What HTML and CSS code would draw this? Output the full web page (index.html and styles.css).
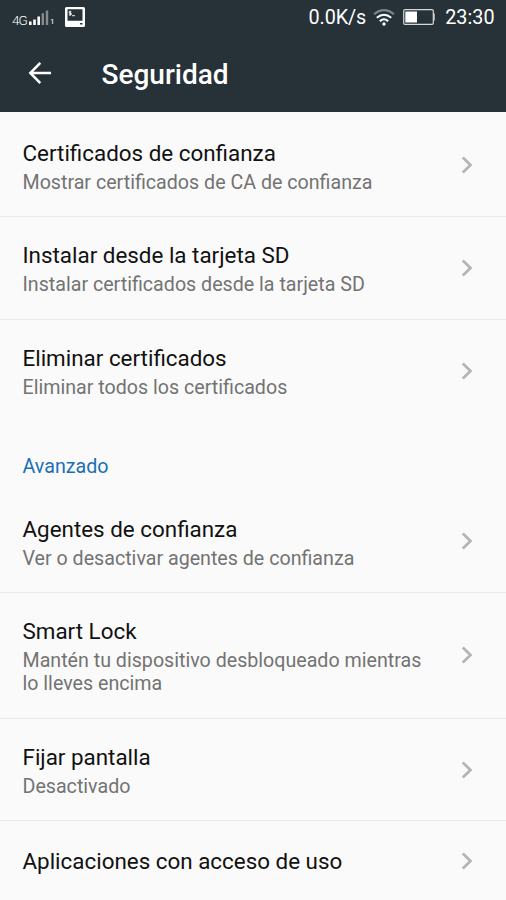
FILE: index.html
```html
<!DOCTYPE html>
<html lang="es">
<head>
<meta charset="utf-8">
<title>Seguridad</title>
<link rel="stylesheet" href="styles.css">
</head>
<body>
<svg class="defs" width="0" height="0" aria-hidden="true">
  <symbol id="chevron" viewBox="0 0 12 18"><path d="M1.800 1.500 9.500 9l-7.700 7.500" fill="none" stroke="#b4b4b4" stroke-width="2.700"/></symbol>
</svg>
<header class="top">
  <div class="status">
    <div class="status-left">
      <span class="net">4G</span>
      <svg class="signal" width="20" height="15" viewBox="0 0 20 15">
        <path d="M0 11.500h2.600V15H0zM4.200 9.500h2.600V15H4.200zM8.400 6.500H11V15H8.400z" fill="#fff"/>
        <path d="M12.600 3.300H15V15h-2.400zM16.800.5h2.400V15h-2.400z" fill="#87898c"/>
      </svg>
      <span class="sim">1</span>
      <svg class="terminal" width="20" height="20" viewBox="0 0 20 20">
        <path fill="#fff" fill-rule="evenodd" d="M1.500 0h17Q20 0 20 1.500v17q0 1.500-1.500 1.500h-17Q0 20 0 18.500v-17Q0 0 1.500 0zM2.500 2.300v11.400h15V2.300zM15 16v1.500h2.500V16z"/>
        <path d="M6.300 4.700H4.200v1.500h2v1.600h-2.300M5.200 3.800v5M7 8.700h3" fill="none" stroke="#fff" stroke-width=".9"/>
      </svg>
    </div>
    <div class="status-right">
      <span class="speed">0.0K/s</span>
      <svg class="wifi" width="22" height="18" viewBox="0 0 22 18" fill="none" stroke-width="2">
        <path d="M1 5.300Q11-3 21 5.300" stroke="#7d878b"/>
        <path d="M3.800 8.800Q11 2.700 18.200 8.800M6.800 12.200Q11 8.300 15.200 12.200" stroke="#fff"/>
        <circle cx="11" cy="15" r="1.700" fill="#fff"/>
      </svg>
      <svg class="battery" width="32" height="16" viewBox="0 0 32 16">
        <rect x=".7" y=".7" width="29.600" height="14.600" rx="1.300" fill="none" stroke="#d4d8d9" stroke-width="1.200"/>
        <path d="M2.300 2.500H14v11H2.300z" fill="#fff"/><path d="M30.300 4.500h1.400v7h-1.400z" fill="#d4d8d9"/>
      </svg>
      <span class="clock">23:30</span>
    </div>
  </div>
  <div class="bar">
    <svg class="back" width="24" height="24" viewBox="0 0 24 24" fill="none" stroke="#fff" stroke-width="2.500"><path d="M12.300 1.800 2.300 12l10 10.200M2.300 12H23"/></svg>
    <h1>Seguridad</h1>
  </div>
</header>
<main>
  <div class="row"><div class="text"><div class="title">Certificados de confianza</div><div class="summary">Mostrar certificados de CA de confianza</div></div><svg class="chevron"><use href="#chevron"/></svg></div>
  <div class="row"><div class="text raised"><div class="title">Instalar desde la tarjeta SD</div><div class="summary">Instalar certificados desde la tarjeta SD</div></div><svg class="chevron"><use href="#chevron"/></svg></div>
  <div class="row last"><div class="text"><div class="title">Eliminar certificados</div><div class="summary">Eliminar todos los certificados</div></div><svg class="chevron"><use href="#chevron"/></svg></div>
  <h2>Avanzado</h2>
  <div class="row"><div class="text"><div class="title">Agentes de confianza</div><div class="summary">Ver o desactivar agentes de confianza</div></div><svg class="chevron"><use href="#chevron"/></svg></div>
  <div class="row tall"><div class="text raised"><div class="title">Smart Lock</div><div class="summary">Mantén tu dispositivo desbloqueado mientras lo lleves encima</div></div><svg class="chevron"><use href="#chevron"/></svg></div>
  <div class="row"><div class="text"><div class="title">Fijar pantalla</div><div class="summary">Desactivado</div></div><svg class="chevron"><use href="#chevron"/></svg></div>
  <div class="row single"><div class="text"><div class="title">Aplicaciones con acceso de uso</div></div><svg class="chevron"><use href="#chevron"/></svg></div>
</main>
</body>
</html>
```
FILE: styles.css
```css
* { box-sizing: border-box; }
body {
  margin: 0;
  height: 900px;
  overflow: hidden;
  background: #fafafa;
  color: #111;
  font-family: Roboto, sans-serif;
}
.defs { position: absolute; }
.top {
  height: 112px;
  background: #263238;
  color: #fff;
}
.status {
  display: flex;
  justify-content: space-between;
  height: 35px;
  padding: 0 11.5px 0 12px;
}
.status-left, .status-right { display: flex; align-items: center; }
.net { font-size: 13.5px; font-weight: 300; line-height: 16px; margin-top: 4px; width: 17px; letter-spacing: -.9px; }
.signal { margin-top: -1px; }
.sim { font-size: 8px; line-height: 10px; margin: 8px 0 0 1px; width: 5px; }
.terminal { margin-left: 10px; margin-top: -1px; }
.speed, .clock { font-size: 19.8px; line-height: 24px; margin-top: 1px; }
.speed { letter-spacing: -.1px; }
.wifi { margin-left: 7px; }
.battery { margin: -1px 0 0 8px; }
.clock { margin-left: 10px; }
.bar { display: flex; align-items: center; height: 77px; padding-left: 28px; }
.back { margin-top: -1px; }
h1 { margin: 2px 0 0 49.5px; font-size: 28px; line-height: 34px; font-weight: 500; }
main { padding-top: 2px; }
.row {
  display: flex;
  align-items: center;
  justify-content: space-between;
  height: 102.75px;
  padding: 0 33px 0 22.5px;
  border-bottom: 1px solid #e8e8e8;
}
.last { border-bottom-color: transparent; }
.tall { height: 126px; }
.single { height: 80px; border: 0; }
.text { width: 412px; padding-top: 2px; }
.raised, .single .text { padding-top: 0; }
.title { font-size: 22.4px; line-height: 28px; white-space: nowrap; }
.summary { font-size: 19.65px; line-height: 23px; color: #737373; margin-top: 4px; margin-bottom: -1px; }
.chevron { width: 12px; height: 18px; flex: none; margin-top: 1px; }
.tall .chevron, .single .chevron { margin-top: 0; }
h2 {
  margin: 0;
  padding: 33px 22.5px 0;
  height: 67.5px;
  font-size: 19.65px;
  line-height: 24px;
  font-weight: 400;
  color: #1a6fb5;
}
```
